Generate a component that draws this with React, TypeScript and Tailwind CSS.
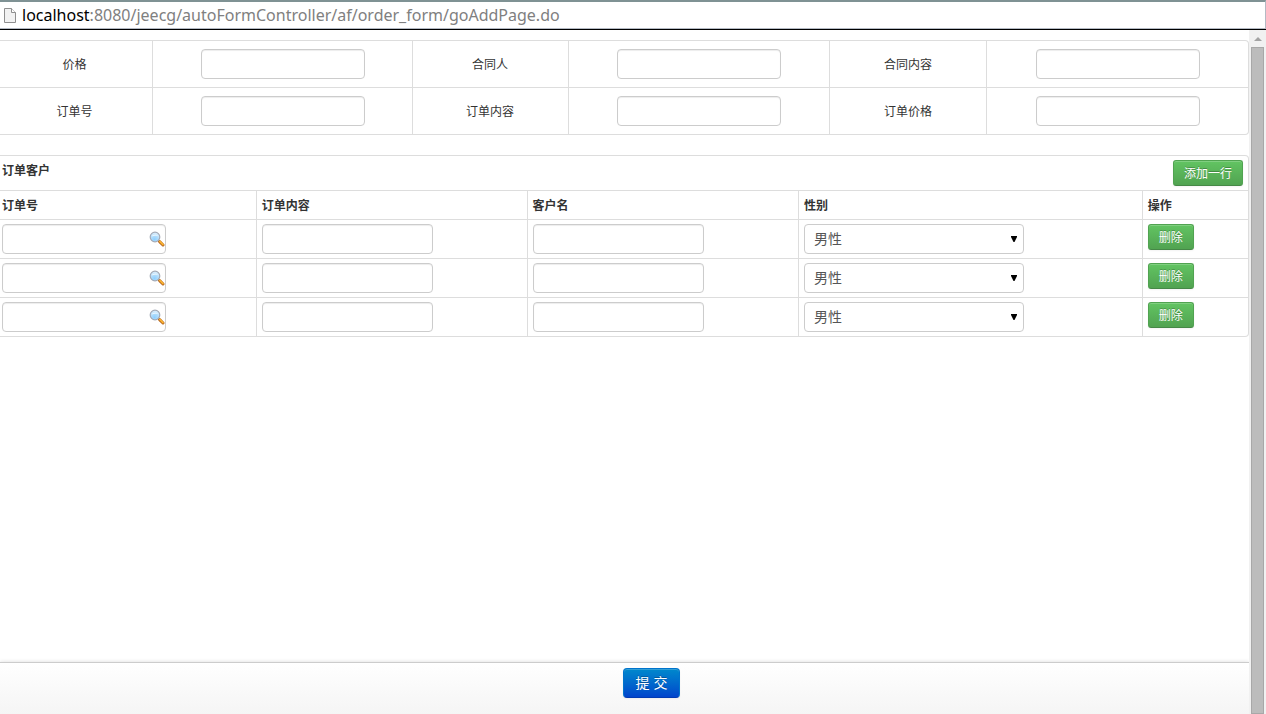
import { useState } from "react";
import type { ReactNode } from "react";

const FIELD_ROWS = [
  [
    { id: "price", label: "价格" },
    { id: "contractor", label: "合同人" },
    { id: "contractContent", label: "合同内容" },
  ],
  [
    { id: "orderNo", label: "订单号" },
    { id: "orderContent", label: "订单内容" },
    { id: "orderPrice", label: "订单价格" },
  ],
];

const inputClass =
  "h-[30px] rounded border border-[#ccc] bg-white px-1.5 text-sm text-[#555] shadow-[inset_0_1px_1px_rgba(0,0,0,0.075)] outline-none focus:border-sky-400";

function FileIcon() {
  return (
    <svg width="12" height="16" viewBox="0 0 12 16" className="shrink-0" aria-hidden="true">
      <path d="M.5 1.500h7l4 4v10H.5z" fill="#f2f2f2" stroke="#8f8f8f" />
      <path d="M7.5 1.5v4h4" fill="#fff" stroke="#8f8f8f" />
    </svg>
  );
}

function SearchIcon() {
  return (
    <svg width="16" height="16" viewBox="0 0 16 16" aria-hidden="true">
      <defs>
        <radialGradient id="lens" cx="0.45" cy="0.75" r="0.7">
          <stop offset="0" stopColor="#8fd0ff" />
          <stop offset="0.6" stopColor="#b5defb" />
          <stop offset="1" stopColor="#dceefb" />
        </radialGradient>
      </defs>
      <path d="M9.5 9.5l1.5 1.5" stroke="#8c8c8c" strokeWidth="1.5" />
      <path d="M10.6 10.6l3.4 3.4" stroke="#b5651d" strokeWidth="3" strokeLinecap="round" />
      <path d="M10.8 10.4l3.2 3.2" stroke="#fbb531" strokeWidth="1.6" strokeLinecap="round" />
      <circle cx="6" cy="6" r="4.8" fill="url(#lens)" stroke="#a3a9b5" strokeWidth="1.2" />
      <path d="M2.8 5.4C3.4 3.2 8 2.6 9.2 5.2 7.5 4.6 5 4.6 2.8 5.4z" fill="#fff" opacity="0.7" />
    </svg>
  );
}

function GreenButton({ children, onClick }: { children: ReactNode; onClick: () => void }) {
  return (
    <button
      type="button"
      onClick={onClick}
      className="block h-[26px] rounded-[3px] border border-[#51a351] border-b-[#468847] bg-linear-to-b from-[#62c462] to-[#51a351] px-2.5 text-xs whitespace-nowrap text-white shadow-[inset_0_1px_0_rgba(255,255,255,0.2),0_1px_2px_rgba(0,0,0,0.05)] text-shadow-[0_-1px_0_rgba(0,0,0,0.25)] cursor-pointer"
    >
      {children}
    </button>
  );
}

function AddressBar() {
  return (
    <header className="h-[30px] shrink-0 border-b border-black bg-white">
      <div className="flex h-[29px] items-center gap-1.5 border-t-2 border-r border-b border-t-[#7f9294] border-r-[#b4bac4] border-b-[#b4bac4] pl-1">
        <FileIcon />
        <div className="font-['Noto_Sans',sans-serif] text-base leading-6 text-[#808080]">
          <span className="text-black">localhost</span>
          :8080/jeecg/autoFormController/af/order_form/goAddPage.do
        </div>
      </div>
    </header>
  );
}

function OrderFields() {
  return (
    <table className="w-full table-fixed border-separate border-spacing-0 rounded border border-l-0 border-[#ddd]">
      <colgroup>
        <col className="w-[12.45%]" />
        <col className="w-[20.75%]" />
        <col className="w-[12.45%]" />
        <col className="w-[20.9%]" />
        <col className="w-[12.53%]" />
        <col />
      </colgroup>
      <tbody>
        {FIELD_ROWS.map((row, i) => (
          <tr key={i}>
            {row.map((field) => (
              <FieldCells key={field.id} id={field.id} label={field.label} topLine={i > 0} />
            ))}
          </tr>
        ))}
      </tbody>
    </table>
  );
}

function FieldCells({ id, label, topLine }: { id: string; label: string; topLine: boolean }) {
  const line = topLine ? "border-t" : "";
  return (
    <>
      <td className={`border-l border-[#ddd] p-2 text-center ${line}`}>
        <label htmlFor={id}>{label}</label>
      </td>
      <td className={`border-l border-[#ddd] py-2 pr-2 pl-[9px] text-center ${line}`}>
        <input id={id} type="text" className={`${inputClass} mx-auto block w-[164px]`} />
      </td>
    </>
  );
}

function CustomerRow({ onRemove }: { onRemove: () => void }) {
  return (
    <tr className="align-top">
      <td className="border-t border-l border-[#ddd] px-[5px] py-1">
        <div className="relative w-[164px]">
          <input type="text" aria-label="订单号" className={`${inputClass} block w-full pr-5`} />
          <button type="button" aria-label="查询" className="absolute top-[7px] right-px cursor-pointer">
            <SearchIcon />
          </button>
        </div>
      </td>
      <td className="border-t border-l border-[#ddd] px-[5px] py-1">
        <input type="text" aria-label="订单内容" className={`${inputClass} block w-[171px]`} />
      </td>
      <td className="border-t border-l border-[#ddd] px-[5px] py-1">
        <input type="text" aria-label="客户名" className={`${inputClass} block w-[171px]`} />
      </td>
      <td className="border-t border-l border-[#ddd] px-[5px] py-1">
        <div className="relative w-[220px]">
          <select
            aria-label="性别"
            className="block h-[30px] w-full appearance-none rounded border border-[#ccc] bg-white px-[9px] font-['Liberation_Sans','Noto_Sans_CJK_SC',sans-serif] text-sm text-[#555] outline-none"
          >
            <option>男性</option>
            <option>女性</option>
          </select>
          <svg
            width="6"
            height="6"
            viewBox="0 0 6 6"
            className="pointer-events-none absolute top-3 right-[7px]"
            aria-hidden="true"
          >
            <path d="M0 0h6v1L3.5 6h-1L0 1z" fill="#000" />
          </svg>
        </div>
      </td>
      <td className="border-t border-l border-[#ddd] px-[5px] py-1">
        <GreenButton onClick={onRemove}>删除</GreenButton>
      </td>
    </tr>
  );
}

function CustomerTable() {
  const [rows, setRows] = useState([1, 2, 3]);

  function addRow() {
    setRows([...rows, Math.max(0, ...rows) + 1]);
  }

  return (
    <table className="w-full table-fixed border-separate border-spacing-0 rounded border border-l-0 border-[#ddd]">
      <colgroup>
        <col className="w-[20.75%]" />
        <col className="w-[21.63%]" />
        <col className="w-[21.68%]" />
        <col className="w-[27.45%]" />
        <col />
      </colgroup>
      <thead className="text-left">
        <tr>
          <th colSpan={5} className="border-l border-[#ddd] px-[5px] py-1">
            <div className="flex items-start justify-between">
              <span className="leading-5">订单客户</span>
              <GreenButton onClick={addRow}>
                <span className="font-normal">添加一行</span>
              </GreenButton>
            </div>
          </th>
        </tr>
        <tr>
          {["订单号", "订单内容", "客户名", "性别", "操作"].map((title) => (
            <th key={title} className="border-t border-l border-[#ddd] px-[5px] py-1 leading-5">
              {title}
            </th>
          ))}
        </tr>
      </thead>
      <tbody>
        {rows.map((row) => (
          <CustomerRow key={row} onRemove={() => setRows(rows.filter((r) => r !== row))} />
        ))}
      </tbody>
    </table>
  );
}

function Scrollbar() {
  return (
    <div className="flex w-[17px] shrink-0 flex-col items-center bg-[#f1f1f1]" aria-hidden="true">
      <div className="flex h-[17px] items-center">
        <svg width="8" height="4" viewBox="0 0 8 4">
          <path d="M4 0l4 4H0z" fill="#a3a3a3" />
        </svg>
      </div>
      <div className="w-[13px] flex-1 border border-[#a8a8a8] bg-[#bcbcbc]" />
    </div>
  );
}

export default function App() {
  return (
    <div className="flex h-screen flex-col overflow-hidden bg-white font-['Noto_Sans_CJK_SC',sans-serif] text-xs text-[#333]">
      <AddressBar />
      <div className="flex min-h-0 flex-1">
        <form className="flex min-w-0 flex-1 flex-col overflow-hidden" onSubmit={(e) => e.preventDefault()}>
          <main className="-ml-1 flex min-h-0 flex-1 flex-col gap-5 overflow-hidden pt-2.5">
            <OrderFields />
            <CustomerTable />
          </main>
          <footer className="relative flex h-[52px] shrink-0 items-start justify-center border-t border-[#ccc] bg-linear-to-b from-white to-[#f5f5f5] pt-[5px] pl-[54px] shadow-[0_0_4px_rgba(0,0,0,0.15)]">
            <button
              type="submit"
              className="h-[30px] rounded border border-[#0074cc] border-b-[#003ab3] bg-linear-to-b from-[#0088cc] to-[#0044cc] px-3 font-['Liberation_Sans','Noto_Sans_CJK_SC',sans-serif] text-sm text-white shadow-[inset_0_1px_0_rgba(255,255,255,0.2),0_1px_2px_rgba(0,0,0,0.05)] text-shadow-[0_-1px_0_rgba(0,0,0,0.25)] cursor-pointer"
            >
              提 交
            </button>
          </footer>
        </form>
        <Scrollbar />
      </div>
    </div>
  );
}
